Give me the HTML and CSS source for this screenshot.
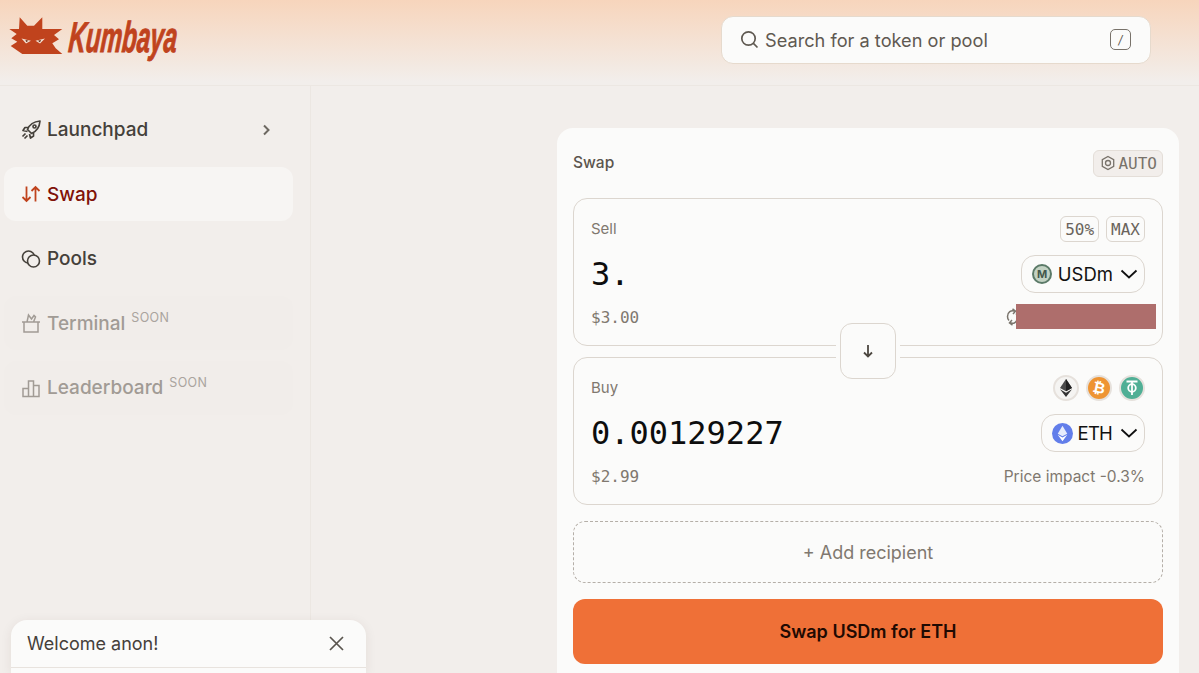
FILE: index.html
```html
<!DOCTYPE html>
<html lang="en">
<head>
    <meta charset="UTF-8">
    <title>Kumbaya</title>
    <link rel="stylesheet" href="styles.css">
</head>
<body>
<header class="topbar">
    <a href="#" class="logo">
        <svg class="logo-mark" viewBox="0 0 55 38" width="55" height="38">
            <path fill="#c0431d" d="M0.300 12H10L10.700 0.300L18.300 8.700H25L33.300 0.300V12H53.300L45 18L50 22.300L43.300 26.300L46.700 31.300L53.300 37H13.300L1.700 29L8.300 24.700L2.300 21.300L7.700 17Z"/>
            <path fill="#f3dfd0" d="M12.500 21.500L22 23.700L17 26.500ZM26.500 23.700L36 21.500L31 26.500Z"/>
            <path fill="#5a1c08" d="M16.500 23L19.500 23.800L17.200 25ZM29 23.800L32 23L31 25.200Z"/>
        </svg>
        <span class="logo-text"><span>Kumbaya</span></span>
    </a>
    <div class="search">
        <svg class="ico" width="19" height="19" viewBox="0 0 19 19" fill="none" stroke="#5f5951" stroke-width="1.7"><circle cx="8.5" cy="8.5" r="6.7"/><path d="M13.4 13.4L17.5 17.5"/></svg>
        <span class="search-text">Search for a token or pool</span>
        <span class="key">/</span>
    </div>
</header>

<div class="layout">
    <nav class="sidebar">
        <a href="#" class="nav-item">
            <svg class="nav-ico" width="20" height="20" viewBox="0 0 20 20" fill="none" stroke="currentColor" stroke-width="1.700" stroke-linejoin="round"><path d="M6.500 9.500C8.500 4.500 13 1.500 19 1C18.500 7 15.500 11.500 10.500 13.500L6.500 9.500Z"/><circle cx="13.500" cy="6.500" r="1.500"/><path d="M7.500 7.500H4L2 10.500L6.500 11.500M12.500 12.500V16L9.500 18L8.500 14M4.500 13.500L1.500 16.500M6.500 15.500L3.500 18.500"/></svg>
            <span>Launchpad</span>
            <svg class="nav-chev" width="9" height="12" viewBox="0 0 9 12" fill="none" stroke="#6d6861" stroke-width="2"><path d="M2 1.500L6.500 6L2 10.500"/></svg>
        </a>
        <a href="#" class="nav-item active">
            <svg class="nav-ico" width="20" height="20" viewBox="0 0 20 20" fill="none" stroke="#c0431d" stroke-width="1.800"><path d="M5.500 2.500V17M1.500 13L5.500 17L9.500 13M14.500 17.500V3M10.500 7L14.500 3L18.500 7"/></svg>
            <span>Swap</span>
        </a>
        <a href="#" class="nav-item">
            <svg class="nav-ico" width="20" height="20" viewBox="0 0 20 20" fill="none" stroke="currentColor" stroke-width="1.600"><circle cx="7.500" cy="8" r="6"/><circle cx="12.500" cy="12" r="6" fill="#f2eeeb"/></svg>
            <span>Pools</span>
        </a>
        <a href="#" class="nav-item soon">
            <svg class="nav-ico" width="20" height="20" viewBox="0 0 20 20" fill="none" stroke="currentColor" stroke-width="1.500"><path d="M1 9H19M3 9V19H17V9M6 9L7.500 2L10.500 6L13 2.500L14.500 4L12.500 9"/></svg>
            <span>Terminal</span><sup class="soon-tag">SOON</sup>
        </a>
        <a href="#" class="nav-item soon">
            <svg class="nav-ico" width="20" height="20" viewBox="0 0 20 20" fill="none" stroke="currentColor" stroke-width="1.500"><path d="M2 10.500H7.500V18.500H2ZM7.500 3H12.500V18.500H7.500ZM12.500 7.500H18V18.500H12.500Z"/></svg>
            <span>Leaderboard</span><sup class="soon-tag">SOON</sup>
        </a>
    </nav>

    <main class="content">
        <section class="card">
            <div class="card-head">
                <span class="card-title">Swap</span>
                <span class="auto">
                    <svg width="16" height="16" viewBox="0 0 16 16" fill="none" stroke="#78726a" stroke-width="1.300"><path d="M8 1.500L13.700 4.700V11.300L8 14.500L2.300 11.300V4.700Z"/><circle cx="8" cy="8" r="2.500"/></svg>
                    AUTO
                </span>
            </div>

            <div class="panels">
                <div class="panel">
                    <div class="row">
                        <span class="label">Sell</span>
                        <span class="chips">
                            <span class="chip">50%</span>
                            <span class="chip">MAX</span>
                        </span>
                    </div>
                    <div class="row">
                        <span class="amount">3.</span>
                        <span class="token">
                            <svg width="20" height="20" viewBox="0 0 20 20"><circle cx="10" cy="10" r="9" fill="#c3d2c3" stroke="#5b7a68" stroke-width="2"/><text x="10" y="13.500" text-anchor="middle" class="coin-m">M</text></svg>
                            USDm
                            <svg class="token-chev" width="18" height="10" viewBox="0 0 18 10" fill="none" stroke="#111" stroke-width="1.800"><path d="M1.500 1.500L9 8.500L16.500 1.500"/></svg>
                        </span>
                    </div>
                    <div class="row">
                        <span class="usd">$3.00</span>
                        <span class="balance">
                            <svg width="13" height="18" viewBox="0 0 13 18" fill="none" stroke="#7b756d" stroke-width="1.500"><path d="M9 3.200C5 1.500 1.500 4.500 1.500 8.500C1.500 10 2 11.500 3 12.500M4 14.800C8 16.500 11.500 13.500 11.500 9.500C11.500 8 11 6.500 10 5.500M6.500 0.800L9.500 3.200L7 6M6.500 17.200L3.500 14.800L6 12"/></svg>
                            <span class="redact"></span>
                        </span>
                    </div>
                </div>

                <button class="flip">
                    <svg width="12" height="16" viewBox="0 0 12 16" fill="none" stroke="#4d4841" stroke-width="1.800"><path d="M6 2V13.500M2 9.500L6 13.500L10 9.500"/></svg>
                </button>

                <div class="panel">
                    <div class="row">
                        <span class="label">Buy</span>
                        <span class="coins">
                            <span class="coin coin-eth">
                                <svg width="12" height="18" viewBox="0 0 12 18"><path fill="#4a4a4a" d="M6 0L12 9L6 12.300L0 9Z"/><path fill="#222" d="M6 0L12 9L6 12.300Z"/><path fill="#333" d="M0 10.300L6 18L12 10.300L6 13.700Z"/></svg>
                            </span>
                            <span class="coin coin-btc"><span>₿</span></span>
                            <span class="coin coin-usdt">
                                <svg width="14" height="16" viewBox="0 0 14 16" fill="none" stroke="#fff" stroke-width="1.800"><path d="M1.500 1.500H12.500M7 1.500V15"/><circle cx="7" cy="8" r="3.800"/></svg>
                            </span>
                        </span>
                    </div>
                    <div class="row">
                        <span class="amount">0.00129227</span>
                        <span class="token token-eth">
                            <svg width="21" height="21" viewBox="0 0 22 22"><circle cx="11" cy="11" r="11" fill="#627eea"/><path fill="#fff" d="M11 3L16 11.200L11 14L6 11.200Z" opacity=".85"/><path fill="#fff" d="M6 12.300L11 15.200L16 12.300L11 19Z"/></svg>
                            ETH
                            <svg class="token-chev" width="18" height="10" viewBox="0 0 18 10" fill="none" stroke="#111" stroke-width="1.800"><path d="M1.500 1.500L9 8.500L16.500 1.500"/></svg>
                        </span>
                    </div>
                    <div class="row">
                        <span class="usd">$2.99</span>
                        <span class="impact">Price impact -0.3%</span>
                    </div>
                </div>
            </div>

            <a href="#" class="add">+ Add recipient</a>
            <button class="submit">Swap USDm for ETH</button>
        </section>
    </main>
</div>

<aside class="welcome">
    <div class="welcome-head">
        <span>Welcome anon!</span>
        <svg width="15" height="15" viewBox="0 0 15 15" fill="none" stroke="#5a554e" stroke-width="1.700"><path d="M1 1L14 14M14 1L1 14"/></svg>
    </div>
</aside>
</body>
</html>
```

FILE: styles.css
```css
* {
    box-sizing: border-box;
    padding: 0;
    margin: 0;
}

html, body {
    height: 673px;
    overflow: hidden;
}

body {
    position: relative;
    background-color: #f2eeeb;
    font-family: Inter, "Liberation Sans", sans-serif;
    color: #45403a;
}

a {
    text-decoration: none;
    color: inherit;
}

button {
    font-family: inherit;
    border: 0;
}

svg {
    flex: none;
}

/* top bar */
.topbar {
    display: flex;
    align-items: center;
    height: 86px;
    padding: 0 48px 6px 10px;
    background: linear-gradient(#f7d5bc, #f2eeeb 96%);
    border-bottom: 1px solid #ece7e2;
}

.logo {
    display: flex;
    align-items: center;
    gap: 3px;
    height: 46px;
    margin-bottom: 5px;
    color: #c0431d;
}

.logo-mark {
    margin: -2px 0 0 -1px;
}

.logo-text {
    display: block;
    width: 112px;
    height: 46px;
    font-family: "Liberation Sans", sans-serif;
    font-size: 43px;
    font-weight: 700;
    font-style: italic;
    line-height: 46px;
    white-space: nowrap;
}

.logo-text span {
    display: inline-block;
    transform: skewX(-5deg) scaleX(.56);
    transform-origin: left bottom;
    -webkit-text-stroke: 1px #c0431d;
}

.search {
    display: flex;
    align-items: center;
    width: 430px;
    height: 48px;
    margin-left: auto;
    padding: 0 19px 0 18px;
    background-color: #fbfbfa;
    border: 1px solid #e6dacd;
    border-radius: 12px;
    color: #5f5951;
}

.search-text {
    flex: 1;
    margin-left: 6px;
    font-size: 18.200px;
}

.key {
    display: flex;
    align-items: center;
    justify-content: center;
    width: 21px;
    height: 21px;
    border: 1px solid #78726a;
    border-radius: 5px;
    font-size: 12px;
    font-style: italic;
}

/* sidebar + content */
.layout {
    display: flex;
    height: 587px;
}

.sidebar {
    display: flex;
    flex-direction: column;
    gap: 10.500px;
    width: 311px;
    padding: 16.500px 17px 0 4px;
    border-right: 1px solid #ece7e2;
}

.nav-item {
    display: flex;
    align-items: center;
    gap: 6px;
    height: 54px;
    padding: 0 22px 0 17px;
    border-radius: 12px;
    font-size: 19px;
    font-weight: 500;
    color: #45403a;
}

.nav-chev {
    margin-left: auto;
}

.active {
    background-color: #f7f5f3;
    color: #801208;
}

.soon {
    background-color: #f1edea;
    color: #a19b95;
}

.soon-tag {
    align-self: flex-start;
    margin: 14px 0 0 0;
    font-size: 12.500px;
    font-weight: 400;
    letter-spacing: .3px;
    line-height: 16px;
    color: #aaa49e;
}

.content {
    display: flex;
    flex: 1;
    justify-content: flex-end;
    padding: 42px 20px 0 0;
}

.card {
    width: 622px;
    height: 545px;
    padding: 0 16px;
    background-color: #fbfbfa;
    border-radius: 16px 16px 0 0;
}

.card-head {
    display: flex;
    align-items: center;
    justify-content: space-between;
    height: 70px;
}

.card-title {
    margin-bottom: 2px;
    font-size: 15.500px;
    font-weight: 500;
    color: #5b554d;
}

.auto {
    display: flex;
    align-items: center;
    gap: 2px;
    height: 27px;
    padding: 0 5px 0 6px;
    background-color: #f2eeeb;
    border: 1px solid #e4ded8;
    border-radius: 6px;
    font-family: "DejaVu Sans Mono", monospace;
    font-size: 16px;
    color: #78726a;
}

.panels {
    position: relative;
    display: flex;
    flex-direction: column;
    gap: 11px;
}

.panel {
    display: flex;
    flex-direction: column;
    gap: 12px;
    height: 148px;
    padding: 16px 17px;
    border: 1px solid #dcd6cf;
    border-radius: 14px;
}

.row {
    display: flex;
    align-items: center;
    justify-content: space-between;
}

.row:nth-child(1) {
    height: 28px;
}

.row:nth-child(2) {
    height: 38px;
}

.row:nth-child(3) {
    height: 24px;
}

.label {
    margin-bottom: 2px;
    font-size: 15px;
    color: #80786f;
}

.chips {
    display: flex;
    gap: 7px;
}

.chip {
    display: flex;
    align-items: center;
    height: 26px;
    padding: 0 4px;
    border: 1px solid #dcd6cf;
    border-radius: 6px;
    font-family: "DejaVu Sans Mono", monospace;
    font-size: 16px;
    color: #6a645c;
}

.amount {
    font-family: "DejaVu Sans Mono", monospace;
    font-size: 32px;
    color: #0d0d0d;
}

.token {
    display: flex;
    align-items: center;
    gap: 6px;
    height: 38px;
    padding: 0 6px 0 10px;
    border: 1px solid #dcd6cf;
    border-radius: 14px;
    font-size: 18.500px;
    color: #111;
}

.token-eth {
    gap: 5px;
    letter-spacing: -.8px;
}

.token-chev {
    margin-left: 1px;
}

.token-eth .token-chev {
    margin-left: 3px;
}

.coin-m {
    font-family: Inter, sans-serif;
    font-size: 11px;
    font-weight: 700;
    fill: #44584d;
}

.usd {
    font-family: "DejaVu Sans Mono", monospace;
    font-size: 16px;
    color: #80786f;
}

.balance {
    display: flex;
    align-items: center;
    margin-right: -11px;
}

.redact {
    width: 140px;
    height: 25px;
    margin: 0 0 1px -3px;
    background-color: #ae6e6c;
}

.coins {
    display: flex;
    gap: 7px;
}

.coin {
    display: flex;
    align-items: center;
    justify-content: center;
    width: 26px;
    height: 26px;
    border: 2px solid #e6e1dc;
    border-radius: 50%;
}

.coin-eth {
    background-color: #f5f4f2;
}

.coin-btc {
    background-color: #ee9433;
    font-family: "DejaVu Sans", sans-serif;
    font-size: 15px;
    font-weight: 700;
    color: #fff;
}

.coin-btc span {
    transform: rotate(12deg);
}

.coin-usdt {
    background-color: #50af95;
}

.impact {
    font-size: 15.500px;
    color: #80786f;
}

.flip {
    position: absolute;
    top: 125px;
    left: 267px;
    display: flex;
    align-items: center;
    justify-content: center;
    width: 56px;
    height: 56px;
    background-color: #fbfbfa;
    border: 1px solid #dcd6cf;
    border-radius: 12px;
    box-shadow: 0 0 0 4px #fbfbfa;
}

.add {
    display: flex;
    align-items: center;
    justify-content: center;
    height: 62px;
    margin-top: 16px;
    border: 1px dashed #b5afa8;
    border-radius: 12px;
    font-size: 18px;
    color: #80786f;
}

.submit {
    display: block;
    width: 100%;
    height: 65px;
    margin-top: 16px;
    background-color: #ef7037;
    border-radius: 12px;
    font-size: 18px;
    font-weight: 600;
    color: #1f0a02;
}

/* welcome popup */
.welcome {
    position: absolute;
    left: 11px;
    top: 620px;
    width: 355px;
    height: 53px;
    background-color: #fbfbfa;
    border-radius: 16px 16px 0 0;
    box-shadow: 0 2px 12px rgba(60, 40, 20, .08);
}

.welcome-head {
    display: flex;
    align-items: center;
    justify-content: space-between;
    height: 48px;
    padding: 0 22px 0 16px;
    border-bottom: 1px solid #e8e3de;
    font-size: 18px;
    color: #45403a;
}
```
